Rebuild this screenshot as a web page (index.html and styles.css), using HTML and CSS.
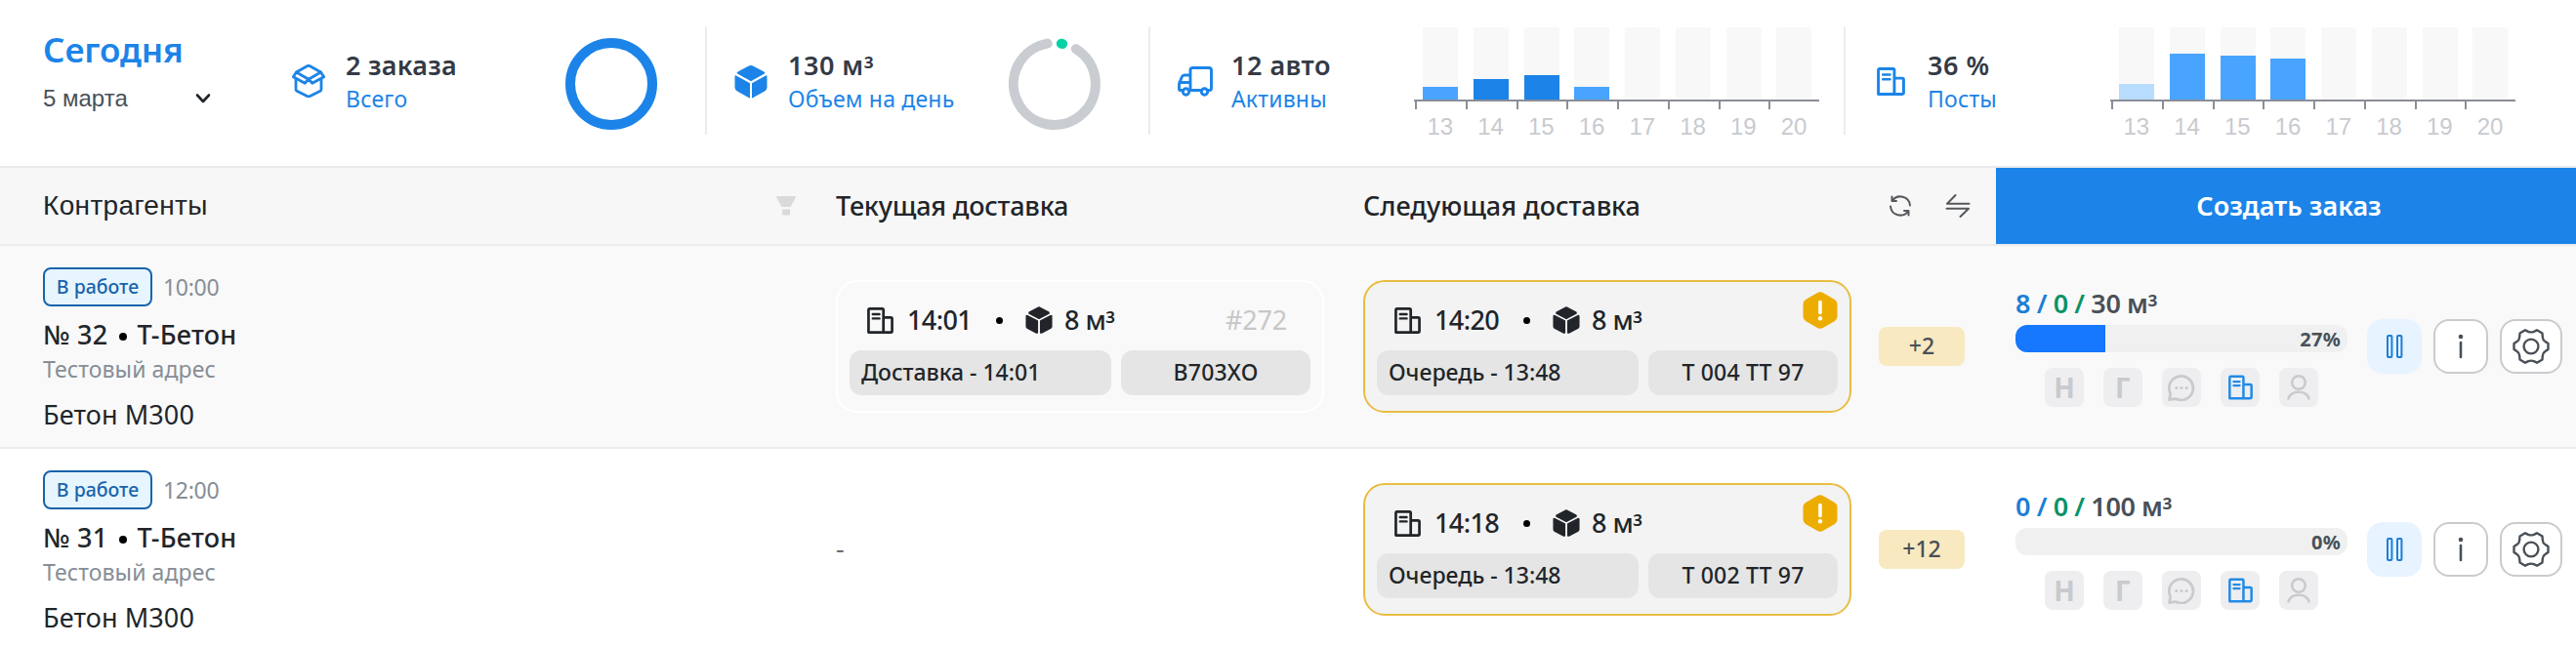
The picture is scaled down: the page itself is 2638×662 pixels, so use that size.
FILE: index.html
```html
<!DOCTYPE html>
<html lang="ru">
<head>
<meta charset="utf-8">
<title>Доставки</title>
<link rel="stylesheet" href="styles.css">
</head>
<body>
<svg class="sprite" aria-hidden="true">
  <symbol id="building" viewBox="0 0 28 28" fill="none" stroke="currentColor" stroke-width="2.8" stroke-linejoin="round" stroke-linecap="round">
    <path d="M1.5 26.5V2.8Q1.5 1.5 2.8 1.5H16Q17.3 1.5 17.3 2.8V26.5ZM17.3 10.7H25.2Q26.5 10.7 26.5 12V25.2Q26.5 26.5 25.2 26.5H17.3"/>
    <path d="M6 7.3H13M6 11.8H13" stroke-width="2.5"/>
  </symbol>
  <symbol id="cube" viewBox="0 0 34 34" fill="currentColor">
    <path d="M14.5 1.2Q17-.2 19.5 1.2L29 6.3Q30.800 7.300 31.700 8.600L17 16.700 2.300 8.600Q3.200 7.300 5 6.300Z"/>
    <path d="M.9 10.500L16 18.700V34Q15 33.800 13.800 33L3 27Q.5 25.500.5 23V12.500Z"/>
    <path d="M33.100 10.500L18 18.700V34Q19 33.800 20.200 33L31 27Q33.500 25.500 33.500 23V12.500Z"/>
  </symbol>
  <symbol id="cube-split" viewBox="0 0 28 28" fill="currentColor" stroke="currentColor" stroke-width="1.500" stroke-linejoin="round">
    <path d="M14 1L24 6.200V7.200L14 12.300 4 7.200V6.200Z"/>
    <path d="M1.200 9.800L2 9.600 12.300 15V27H11.500L2 22 1.200 20.800Z"/>
    <path d="M26.800 9.800L26 9.600 15.700 15V27H16.500L26 22 26.800 20.800Z"/>
  </symbol>
  <symbol id="warning" viewBox="0 0 36 38">
    <path d="M15.200 1Q18-.5 20.800 1L32.500 7.700Q35.500 9.500 35.500 12.500V25.500Q35.500 28.500 32.500 30.300L20.800 37Q18 38.500 15.200 37L3.500 30.300Q.5 28.500.5 25.500V12.500Q.5 9.500 3.500 7.700Z" fill="#edad00"/>
    <path d="M18 10.500V21.500" stroke="#fff" stroke-width="3.600" stroke-linecap="round"/>
    <circle cx="18" cy="27.300" r="2.200" fill="#fff"/>
  </symbol>
  <symbol id="chat" viewBox="0 0 28 28" fill="none" stroke="currentColor" stroke-width="2.800" stroke-linejoin="round">
    <path d="M1.500 26.500L2.700 20.300A12.300 12.300 0 1 1 8 25.600Z"/>
    <g fill="currentColor" stroke="none"><circle cx="8.800" cy="14.500" r="1.600"/><circle cx="14" cy="14.500" r="1.600"/><circle cx="19.200" cy="14.500" r="1.600"/></g>
  </symbol>
  <symbol id="person" viewBox="0 0 26 28" fill="none" stroke="currentColor" stroke-width="2.600" stroke-linecap="round">
    <circle cx="13" cy="9" r="6.800"/><path d="M2.500 25.500Q4.500 18.800 13 18.800T23.500 25.500"/>
  </symbol>
  <symbol id="gear" viewBox="0 0 38 38" fill="none" stroke="currentColor" stroke-width="2.400" stroke-linejoin="round">
    <path d="M13 2.300L16.200 3.800Q19 5 21.800 3.800L25 2.300 30.500 5.500 30.800 9.500Q31 12.500 33.500 14L36.500 16V22L33.500 24Q31 25.500 30.800 28.500L30.500 32.500 25 35.700 21.800 34.200Q19 33 16.200 34.200L13 35.700 7.500 32.500 7.200 28.500Q7 25.500 4.500 24L1.500 22V16L4.500 14Q7 12.500 7.200 9.500L7.500 5.500Z"/>
    <circle cx="19" cy="19" r="7.400"/>
  </symbol>
  <symbol id="pause" viewBox="0 0 18 26" fill="none" stroke="currentColor" stroke-width="2">
    <rect x="2" y="2" width="4.400" height="22" rx="1"/><rect x="12" y="2" width="4.400" height="22" rx="1"/>
  </symbol>
</svg>

<header class="stats">
  <section class="date">
    <h1 class="date-title">Сегодня</h1>
    <div class="date-select">5 марта
      <svg width="16" height="12" viewBox="0 0 16 12" fill="none" stroke="#212529" stroke-width="2.600" stroke-linecap="round" stroke-linejoin="round"><path d="M2 2.500L8 9 14 2.500"/></svg>
    </div>
  </section>

  <section class="stat">
    <span class="stat-icon"><svg width="34" height="34" viewBox="0 0 34 34" fill="none" stroke="currentColor" stroke-width="2.800" stroke-linejoin="round" stroke-linecap="round">
      <path d="M4.500 8L15.500 1.800Q17 1 18.500 1.800L29.500 8 17 15.200Z"/>
      <path d="M4.500 8L1.300 12.700 13.200 19.300 17 15.200 20.800 19.300 32.700 12.700 29.500 8"/>
      <path d="M4 15V25.500Q4 26.700 5 27.200L15.500 32.600Q17 33.400 18.500 32.600L29 27.200Q30 26.700 30 25.500V15"/>
    </svg></span>
    <div class="stat-text"><b>2 заказа</b><span>Всего</span></div>
    <svg class="ring" width="94" height="94" viewBox="0 0 94 94"><circle cx="47" cy="47" r="42" fill="none" stroke="#1c84e8" stroke-width="10"/></svg>
  </section>

  <section class="stat divided">
    <span class="stat-icon"><svg width="34" height="35"><use href="#cube"/></svg></span>
    <div class="stat-text"><b class="wide">130 м<i class="cubic">³</i></b><span>Объем на день</span></div>
    <svg class="ring" width="94" height="94" viewBox="0 0 94 94" fill="none" stroke-width="10" stroke-linecap="round">
      <path d="M68.900 11.200A42 42 0 1 1 39.700 5.600" stroke="#c9ccd1"/>
      <path d="M53.800 5.700L55.200 5.900" stroke="#08d1a5"/>
    </svg>
  </section>

  <section class="stat divided">
    <span class="stat-icon"><svg width="36" height="31" viewBox="0 0 36 31" fill="none" stroke="currentColor" stroke-width="2.900" stroke-linejoin="round" stroke-linecap="round">
      <path d="M5 24.500H2.500Q1.500 24.500 1.500 23.300V18L4.300 10.800Q5.200 9 7 9H13M13 24.500V4Q13 1.500 15.500 1.500H32Q34.500 1.500 34.500 4V22.500Q34.500 24.500 32.500 24.500H31M12 24.500H24M1.800 16.500H12.500"/>
      <circle cx="8.500" cy="26" r="3.200"/><circle cx="27.500" cy="26" r="3.200"/>
    </svg></span>
    <div class="stat-text"><b class="wide">12 авто</b><span>Активны</span></div>
    <div class="chart">
      <div class="slots">
        <i><em class="mid" style="height:13px"></em></i><i><em class="dark" style="height:21px"></em></i><i><em class="dark" style="height:25px"></em></i><i><em class="mid" style="height:13px"></em></i><i></i><i></i><i></i><i></i>
      </div>
      <div class="ticks"><span>13</span><span>14</span><span>15</span><span>16</span><span>17</span><span>18</span><span>19</span><span>20</span></div>
    </div>
  </section>

  <section class="stat divided posts">
    <span class="stat-icon"><svg width="29" height="29"><use href="#building"/></svg></span>
    <div class="stat-text"><b class="wide">36 %</b><span>Посты</span></div>
    <div class="chart">
      <div class="slots">
        <i><em class="pale" style="height:16px"></em></i><i><em class="mid" style="height:47px"></em></i><i><em class="mid" style="height:45px"></em></i><i><em class="mid" style="height:42px"></em></i><i></i><i></i><i></i><i></i>
      </div>
      <div class="ticks"><span>13</span><span>14</span><span>15</span><span>16</span><span>17</span><span>18</span><span>19</span><span>20</span></div>
    </div>
  </section>
</header>

<div class="grid head">
  <div class="head-client">Контрагенты
    <svg width="20" height="20" viewBox="0 0 20 20" fill="#d9dadb"><path d="M0 1Q0 0 1 0H19Q20 0 20 1L14.500 11H5.500ZM6 13.500H14V18.500Q14 19.500 13 19.500H7Q6 19.500 6 18.500Z"/></svg>
  </div>
  <div class="head-cur">Текущая доставка</div>
  <div>Следующая доставка</div>
  <div class="head-tools">
    <svg width="24" height="24" viewBox="0 0 24 24" fill="none" stroke="currentColor" stroke-width="2" stroke-linecap="round" stroke-linejoin="round"><path d="M3.500 2.500V7H8M3.800 6.800A10 10 0 0 1 22 11.500M20.500 21.500V17H16M20.200 17.200A10 10 0 0 1 2 12.500"/></svg>
    <svg width="26" height="24" viewBox="0 0 26 24" fill="none" stroke="currentColor" stroke-width="2" stroke-linecap="round" stroke-linejoin="round"><path d="M10.500 1L2 9.700H24.500M1.500 14.700H24L15.500 23"/></svg>
  </div>
  <button class="create">Создать заказ</button>
</div>

<main>
  <article class="grid row shaded">
    <div class="client">
      <div class="status"><span class="tag">В работе</span><time>10:00</time></div>
      <div class="order">№ 32 <i></i> Т-Бетон</div>
      <div class="address">Тестовый адрес</div>
      <div class="goods">Бетон М300</div>
    </div>
    <div class="card plain">
      <div class="card-top"><svg width="27" height="27"><use href="#building"/></svg><span class="time">14:01</span><i class="dot"></i><svg width="28" height="28"><use href="#cube-split"/></svg><span class="vol">8 м<i class="cubic">³</i></span><span class="num">#272</span></div>
      <div class="pills"><span>Доставка - 14:01</span><span class="plate">В703ХО</span></div>
    </div>
    <div class="card alert">
      <div class="card-top"><svg width="27" height="27"><use href="#building"/></svg><span class="time">14:20</span><i class="dot"></i><svg width="28" height="28"><use href="#cube-split"/></svg><span class="vol">8 м<i class="cubic">³</i></span></div>
      <svg class="warn" width="36" height="38"><use href="#warning"/></svg>
      <div class="pills"><span>Очередь - 13:48</span><span class="plate">Т 004 ТТ 97</span></div>
    </div>
    <div class="more">+2</div>
    <div class="summary">
      <div class="progress">
        <div class="amount"><span class="done">8 /</span> <span class="way">0 /</span> 30 м<i class="cubic">³</i></div>
        <div class="bar"><div class="fill" style="width:27%"></div><b>27%</b></div>
        <div class="flags"><span>Н</span><span>Г</span><span><svg width="28" height="28"><use href="#chat"/></svg></span><span class="on"><svg width="25" height="26"><use href="#building"/></svg></span><span><svg width="26" height="28"><use href="#person"/></svg></span></div>
      </div>
      <div class="actions">
        <button class="hold"><svg width="18" height="26"><use href="#pause"/></svg></button>
        <button><svg width="6" height="26" viewBox="0 0 6 26"><circle cx="3" cy="3" r="2.300" fill="currentColor"/><path d="M3 9V24" stroke="currentColor" stroke-width="2.600" stroke-linecap="round"/></svg></button>
        <button class="gear"><svg width="38" height="38"><use href="#gear"/></svg></button>
      </div>
    </div>
  </article>

  <article class="grid row">
    <div class="client">
      <div class="status"><span class="tag">В работе</span><time>12:00</time></div>
      <div class="order">№ 31 <i></i> Т-Бетон</div>
      <div class="address">Тестовый адрес</div>
      <div class="goods">Бетон М300</div>
    </div>
    <div class="none">-</div>
    <div class="card alert">
      <div class="card-top"><svg width="27" height="27"><use href="#building"/></svg><span class="time">14:18</span><i class="dot"></i><svg width="28" height="28"><use href="#cube-split"/></svg><span class="vol">8 м<i class="cubic">³</i></span></div>
      <svg class="warn" width="36" height="38"><use href="#warning"/></svg>
      <div class="pills"><span>Очередь - 13:48</span><span class="plate">Т 002 ТТ 97</span></div>
    </div>
    <div class="more">+12</div>
    <div class="summary">
      <div class="progress">
        <div class="amount"><span class="done">0 /</span> <span class="way">0 /</span> 100 м<i class="cubic">³</i></div>
        <div class="bar"><div class="fill" style="width:0%"></div><b>0%</b></div>
        <div class="flags"><span>Н</span><span>Г</span><span><svg width="28" height="28"><use href="#chat"/></svg></span><span class="on"><svg width="25" height="26"><use href="#building"/></svg></span><span><svg width="26" height="28"><use href="#person"/></svg></span></div>
      </div>
      <div class="actions">
        <button class="hold"><svg width="18" height="26"><use href="#pause"/></svg></button>
        <button><svg width="6" height="26" viewBox="0 0 6 26"><circle cx="3" cy="3" r="2.300" fill="currentColor"/><path d="M3 9V24" stroke="currentColor" stroke-width="2.600" stroke-linecap="round"/></svg></button>
        <button class="gear"><svg width="38" height="38"><use href="#gear"/></svg></button>
      </div>
    </div>
  </article>
</main>
</body>
</html>
```
FILE: styles.css
```css
* { box-sizing: border-box; }
body {
  margin: 0;
  width: 2638px;
  height: 662px;
  overflow: hidden;
  background: #fff;
  color: #212529;
  font: 500 27px/36px "Noto Sans", sans-serif;
}
svg { display: block; flex: none; }
button { font: inherit; border: 0; padding: 0; }
.sprite { position: absolute; width: 0; height: 0; }
.cubic { font-style: normal; line-height: 0; vertical-align: -4px; }

/* Top statistics */
.stats {
  display: grid;
  grid-template-columns: 299px 423px 454px 712px 1fr;
  height: 172px;
  padding-top: 28px;
  border-bottom: 2px solid #ebebed;
}
.date { padding: 3px 0 0 44px; }
.date-title {
  margin: 0;
  font-size: 35px;
  font-weight: 600;
  line-height: 40px;
  letter-spacing: -.1px;
  color: #1c84e8;
}
.date-select {
  display: flex;
  align-items: center;
  justify-content: space-between;
  width: 172px;
  margin-top: 14px;
  font: 400 24px/32px "Liberation Sans", sans-serif;
  color: #495057;
}
.stat { display: flex; height: 110px; }
.divided { border-left: 2px solid #ebecee; padding-left: 28px; }
.posts { padding-left: 32px; }
.stat-icon {
  display: flex;
  align-items: center;
  width: 55px;
  height: 110px;
  color: #1c84e8;
}
.posts .stat-icon { width: 52px; }
.stat-text {
  display: flex;
  flex-direction: column;
  flex: 1;
  padding-top: 23px;
  line-height: 32px;
}
.stat-text b { font-weight: 600; color: #343a45; letter-spacing: .25px; }
.stat-text .wide { letter-spacing: .5px; }
.stat-text span {
  margin-top: 2px;
  font-size: 23px;
  font-weight: 400;
  letter-spacing: .2px;
  color: #1c84e8;
}
.ring { margin: 11px 49px 0 0; }

/* Hourly charts */
.chart { width: 415px; margin-right: 25px; }
.posts .chart { margin-right: 62px; }
.slots {
  display: grid;
  grid-template-columns: repeat(8, 51.75px);
  height: 76px;
  border-bottom: 2px solid #8b8e98;
}
.slots i {
  display: flex;
  align-items: flex-end;
  width: 36px;
  height: 74px;
  margin-left: 9px;
  background: #f8f8f8;
}
.slots em { width: 100%; }
.pale { background: #b8dcfd; }
.mid { background: #48a4ff; }
.dark { background: #1c84e8; }
.ticks {
  display: grid;
  grid-template-columns: repeat(8, 51.75px);
  margin-left: 1px;
}
.ticks span {
  padding-top: 13px;
  text-align: center;
  font: 400 24px/26px "Liberation Sans", sans-serif;
  color: #c8cacf;
  background: linear-gradient(#8b8e98, #8b8e98) 0 0 / 2px 8px no-repeat;
}

/* Table */
.grid {
  display: grid;
  grid-template-columns: 856px 540px 528px 120px 594px;
}
.head {
  height: 80px;
  align-items: center;
  background: #f7f7f7;
  border-bottom: 2px solid #ebebed;
}
.head-client {
  display: flex;
  align-items: center;
  justify-content: space-between;
  padding: 0 41px 0 44px;
  font-family: "Liberation Sans", sans-serif;
  font-size: 28px;
  font-weight: 400;
  letter-spacing: .35px;
}
.head-cur { letter-spacing: -.2px; }
.head-tools { display: flex; gap: 34px; padding-left: 10px; color: #55585c; }
.create {
  align-self: stretch;
  padding-left: 6px;
  color: #fff;
  background: #1c84e8;
  font-weight: 600;
}
.row { height: 208px; border-bottom: 2px solid #ebecf0; }
.row:last-child { border-bottom: 0; }
.shaded { background: #f9f9f9; }
.client { padding: 22px 0 0 44px; }
.status { display: flex; align-items: center; gap: 11px; }
.tag {
  width: 112px;
  height: 40px;
  border: 2px solid #1864ab;
  border-radius: 8px;
  background: #e7f5ff;
  color: #1864ab;
  font-size: 19.5px;
  line-height: 36px;
  text-align: center;
}
time { font-size: 23px; font-weight: 400; letter-spacing: -.3px; color: #868e96; }
.order {
  display: flex;
  align-items: center;
  gap: 11px;
  margin-top: 11px;
  letter-spacing: .25px;
}
.order i { width: 8px; height: 8px; margin-top: 3px; border-radius: 50%; background: #000; }
.address { font-size: 23px; line-height: 32px; font-weight: 400; letter-spacing: .1px; color: #868e96; margin-top: 1px; }
.goods { font-weight: 400; margin-top: 13px; letter-spacing: .1px; }

.card {
  position: relative;
  width: 500px;
  height: 136px;
  margin-top: 35px;
  border: 2px solid #fff;
  border-radius: 22px;
  padding: 20px 12px 0;
}
.alert { border-color: #e8bd42; background: #f3f3f3; }
.card-top { display: flex; align-items: center; height: 38px; padding-left: 18px; }
.time { width: 67px; margin-left: 14px; letter-spacing: -.6px; }
.dot { width: 7px; height: 7px; margin: 0 23px 0 24px; border-radius: 50%; background: #000; }
.vol { margin-left: 12px; letter-spacing: -.5px; }
.num { margin-left: auto; padding-right: 24px; font-weight: 400; color: #c6c7c9; letter-spacing: -.2px; }
.pills {
  display: grid;
  grid-template-columns: 268px 194px;
  gap: 10px;
  margin-top: 12px;
  font-size: 23px;
  line-height: 45px;
}
.pills span { height: 46px; padding-left: 12px; border-radius: 12px; background: #e5e5e5; }
.pills .plate { padding: 0; text-align: center; letter-spacing: .2px; }
.warn { position: absolute; right: 12px; top: 10px; }
.none { color: #6b6e72; font-weight: 400; line-height: 204px; }
.more {
  width: 88px;
  height: 40px;
  margin-top: 83px;
  border-radius: 8px;
  background: #f8e9c0;
  color: #495057;
  font-size: 23px;
  line-height: 39px;
  text-align: center;
}

/* Progress and actions */
.summary { display: flex; padding-left: 20px; }
.progress { width: 340px; padding-top: 41px; }
.amount { font-weight: 600; color: #495057; letter-spacing: -.4px; line-height: 36px; }
.done { color: #1c7ed6; }
.way { color: #099268; }
.bar {
  display: flex;
  justify-content: space-between;
  height: 28px;
  margin-top: 4px;
  border-radius: 12px;
  overflow: hidden;
  background: #f0f0f0;
}
.fill { background: #1677ff; }
.bar b { padding-right: 7px; font-size: 20px; line-height: 29px; font-weight: 700; color: #495057; letter-spacing: .3px; }
.flags { display: flex; gap: 20px; padding: 16px 0 0 30px; }
.flags span {
  display: grid;
  place-items: center;
  width: 40px;
  height: 40px;
  border-radius: 8px;
  background: #eeeef0;
  color: #c8cacd;
  font-size: 28px;
  font-weight: 700;
  line-height: 40px;
}
.flags .on { color: #228be6; }
.actions { display: flex; gap: 12px; margin: 75px 0 0 20px; }
.actions button {
  display: grid;
  place-items: center;
  width: 56px;
  height: 56px;
  border: 2px solid #c9cbcf;
  border-radius: 16px;
  background: #fff;
  color: #495057;
}
.actions .gear { width: 64px; }
.actions .hold { border-color: #e7f3ff; background: #e7f3ff; color: #1c7ed6; }
```
